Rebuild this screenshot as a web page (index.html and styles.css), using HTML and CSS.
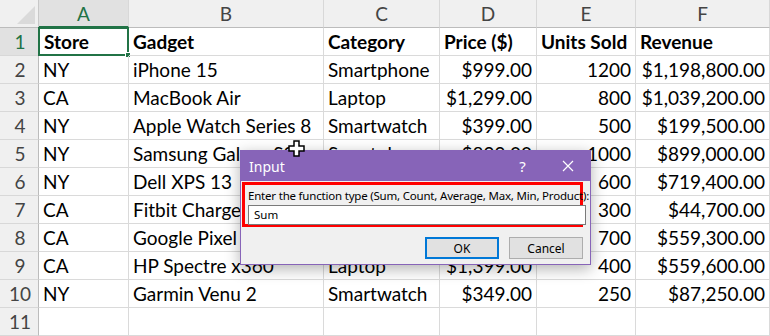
FILE: index.html
```html
<!DOCTYPE html>
<html lang="en">
<head>
    <meta charset="UTF-8">
    <title>Sales - Input</title>
    <link rel="stylesheet" href="styles.css">
</head>
<body>
    <div class="sheet">
        <!-- Column headers -->
        <div class="corner"><span class="corner-tri"></span></div>
        <div class="col-head active">A</div>
        <div class="col-head">B</div>
        <div class="col-head">C</div>
        <div class="col-head">D</div>
        <div class="col-head">E</div>
        <div class="col-head">F</div>

        <div class="row-head active">1</div>
        <div class="cell bold selected">Store<span class="handle"></span></div>
        <div class="cell bold">Gadget</div>
        <div class="cell bold">Category</div>
        <div class="cell bold">Price ($)</div>
        <div class="cell bold">Units Sold</div>
        <div class="cell bold">Revenue</div>

        <div class="row-head">2</div>
        <div class="cell">NY</div><div class="cell">iPhone 15</div><div class="cell">Smartphone</div>
        <div class="cell num">$999.00</div><div class="cell num">1200</div><div class="cell num">$1,198,800.00</div>

        <div class="row-head">3</div>
        <div class="cell">CA</div><div class="cell">MacBook Air</div><div class="cell">Laptop</div>
        <div class="cell num">$1,299.00</div><div class="cell num">800</div><div class="cell num">$1,039,200.00</div>

        <div class="row-head">4</div>
        <div class="cell">NY</div><div class="cell">Apple Watch Series 8</div><div class="cell">Smartwatch</div>
        <div class="cell num">$399.00</div><div class="cell num">500</div><div class="cell num">$199,500.00</div>

        <div class="row-head">5</div>
        <div class="cell">NY</div><div class="cell">Samsung Galaxy S23</div><div class="cell">Smartphone</div>
        <div class="cell num">$899.00</div><div class="cell num">1000</div><div class="cell num">$899,000.00</div>

        <div class="row-head">6</div>
        <div class="cell">NY</div><div class="cell">Dell XPS 13</div><div class="cell">Laptop</div>
        <div class="cell num">$1,199.00</div><div class="cell num">600</div><div class="cell num">$719,400.00</div>

        <div class="row-head">7</div>
        <div class="cell">CA</div><div class="cell">Fitbit Charge 6</div><div class="cell">Fitness Tracker</div>
        <div class="cell num">$149.00</div><div class="cell num">300</div><div class="cell num">$44,700.00</div>

        <div class="row-head">8</div>
        <div class="cell">CA</div><div class="cell">Google Pixel 8</div><div class="cell">Smartphone</div>
        <div class="cell num">$799.00</div><div class="cell num">700</div><div class="cell num">$559,300.00</div>

        <div class="row-head">9</div>
        <div class="cell">CA</div><div class="cell">HP Spectre x360</div><div class="cell">Laptop</div>
        <div class="cell num">$1,399.00</div><div class="cell num">400</div><div class="cell num">$559,600.00</div>

        <div class="row-head">10</div>
        <div class="cell">NY</div><div class="cell">Garmin Venu 2</div><div class="cell">Smartwatch</div>
        <div class="cell num">$349.00</div><div class="cell num">250</div><div class="cell num">$87,250.00</div>

        <div class="row-head">11</div>
        <div class="cell"></div><div class="cell"></div><div class="cell"></div>
        <div class="cell"></div><div class="cell"></div><div class="cell"></div>
    </div>

    <!-- Input box dialog -->
    <div class="dialog">
        <div class="dialog-title">
            <span class="title-text">Input</span>
            <span class="title-btn">?</span>
            <span class="title-btn close">
                <svg width="12" height="12" viewBox="0 0 12 12"><path d="M1 1 L11 11 M11 1 L1 11" stroke="#fff" stroke-width="1.2"/></svg>
            </span>
        </div>
        <div class="dialog-body">
            <div class="prompt-box">
                <div class="prompt">Enter the function type (Sum, Count, Average, Max, Min, Product):</div>
                <div class="text-input">Sum</div>
            </div>
            <div class="buttons">
                <button class="btn default">OK</button>
                <button class="btn">Cancel</button>
            </div>
        </div>
    </div>

    <!-- Mouse pointer -->
    <svg class="pointer" width="17" height="17" viewBox="0 0 17 17">
        <path d="M6 1 H11 V6 H16 V11 H11 V16 H6 V11 H1 V6 H6 Z" fill="#fff" stroke="#000" stroke-width="1.5"/>
    </svg>
</body>
</html>
```

FILE: styles.css
```css
* {
    margin: 0;
    padding: 0;
    box-sizing: border-box;
}
body {
    width: 770px;
    height: 336px;
    overflow: hidden;
    background: #fff;
    font-family: Lato, "Liberation Sans", sans-serif;
    position: relative;
}
/* Spreadsheet grid */
.sheet {
    display: grid;
    grid-template-columns: 39px 90px 195px 116px 97px 99px 134px;
    grid-auto-rows: 28px;
}
.corner, .col-head, .row-head {
    background: #f0f0f0;
    color: #444;
    font-size: 19px;
}
.corner {
    border-right: 1px solid #c8c8c8;
    border-bottom: 1px solid #bcbcbc;
    position: relative;
}
.corner-tri {
    position: absolute;
    right: 3px;
    bottom: 3px;
    width: 0;
    height: 0;
    border-left: 18px solid transparent;
    border-bottom: 18px solid #dadada;
}
.col-head {
    display: flex;
    align-items: center;
    justify-content: center;
    border-right: 1px solid #d8d8d8;
    border-bottom: 1px solid #bcbcbc;
}
.col-head.active {
    background: #e1e1e1;
    color: #217346;
    border-bottom: 2px solid #217346;
}
.row-head {
    display: flex;
    align-items: center;
    justify-content: center;
    padding-left: 2px;
    border-right: 1px solid #bcbcbc;
    border-bottom: 1px solid #d8d8d8;
}
.row-head.active {
    background: #e1e1e1;
    color: #217346;
}
.cell {
    display: flex;
    align-items: center;
    padding: 0 4px;
    font-size: 19px;
    color: #000;
    white-space: nowrap;
    border-right: 1px solid #dadada;
    border-bottom: 1px solid #dadada;
    position: relative;
}
.cell.bold {
    font-weight: bold;
}
.cell.num {
    justify-content: flex-end;
}
.cell.selected {
    border: 2px solid #217346;
    margin: -1px 0 0 -1px;
}
.handle {
    position: absolute;
    right: -4px;
    bottom: -4px;
    width: 6px;
    height: 6px;
    background: #217346;
    border: 1px solid #fff;
}
/* Input dialog */
.dialog {
    position: absolute;
    left: 240px;
    top: 150px;
    width: 351px;
    height: 115px;
    background: #f0f0f0;
    border: 1px solid #8764b8;
    box-shadow: 0 4px 14px rgba(0, 0, 0, 0.3);
    font-family: "Noto Sans", "Liberation Sans", sans-serif;
}
.dialog-title {
    height: 30px;
    background: #8764b8;
    color: #fff;
    display: flex;
    align-items: center;
    padding-left: 8px;
}
.title-text {
    flex: 1;
    font-size: 14px;
}
.title-btn {
    width: 45px;
    text-align: center;
    font-size: 15px;
}
.title-btn.close {
    display: flex;
    justify-content: center;
}
.dialog-body {
    padding: 1px 0 0 1px;
}
.prompt-box {
    width: 341px;
    height: 45px;
    border: 3px solid #ff0000;
    padding: 3px 0 0 3px;
}
.prompt {
    font-size: 11.5px;
    letter-spacing: -0.2px;
    white-space: nowrap;
    color: #000;
    line-height: 15px;
    height: 17px;
}
.text-input {
    width: 338px;
    height: 20px;
    background: #fff;
    border: 1px solid #7a7a7a;
    font-size: 11.5px;
    padding-left: 5px;
    line-height: 18px;
}
.buttons {
    display: flex;
    justify-content: flex-end;
    gap: 10px;
    margin-top: 10px;
    padding-right: 7px;
}
.btn {
    width: 74px;
    height: 22px;
    background: #e1e1e1;
    border: 1px solid #adadad;
    font-family: "Noto Sans", "Liberation Sans", sans-serif;
    font-size: 12px;
    color: #000;
}
.btn.default {
    border: 2px solid #0078d7;
}
.pointer {
    position: absolute;
    left: 288px;
    top: 140px;
}
```
